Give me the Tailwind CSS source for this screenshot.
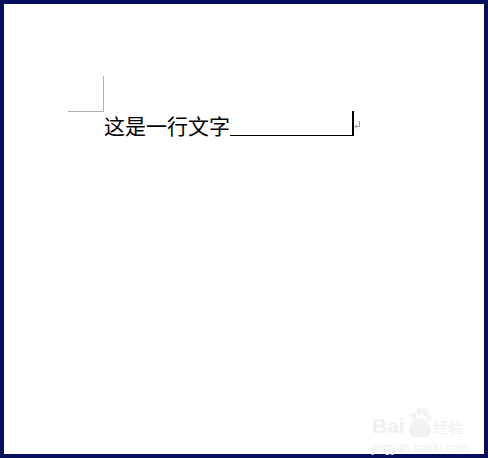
<!DOCTYPE html>
<html lang="zh-CN">
<head>
    <meta charset="UTF-8">
    <title>Word</title>
    <script src="https://cdn.jsdelivr.net/npm/@tailwindcss/browser@4"></script>
</head>
<body class="bg-white overflow-hidden">
    <div class="relative w-[488px] h-[458px] border-[4px] border-[#050f5c] bg-white">
        <!-- page corner mark -->
        <div class="ml-[64px] mt-[72px] w-[36px] h-[36px] border-r border-b border-[#b0b0b0]"></div>

        <!-- text line -->
        <div class="flex items-start ml-[100px] h-[26px] font-['SimSun','Noto_Sans_CJK_SC',sans-serif] text-[21px] leading-[26px] text-black">
            <span>这是一行文字</span>
            <span class="w-[122px] h-[24px] border-b-[1.5px] border-black"></span>
            <span class="w-[2px] h-[25px] -mt-[1px] bg-black"></span>
            <svg class="w-[7px] h-[9px] mt-[9px]" viewBox="0 0 7 9" fill="none" stroke="#999999" stroke-width="1">
                <path d="M5.5 0V5.5H1M3 3.5L1 5.5L3 7.5"/>
            </svg>
        </div>

        <!-- watermark -->
        <div class="absolute left-[368px] top-[403px] w-[100px] h-[48px] text-[#f1f1f3]">
            <div class="flex items-end h-[31px] gap-[1px]">
                <span class="font-['Liberation_Sans',sans-serif] font-bold text-[21px] leading-[24px] tracking-[0px] text-[#f0f0f2]">Bai</span>
                <svg class="w-[26px] h-[31px] shrink-0" viewBox="0 0 26 31" fill="#f2f2f4">
                    <ellipse cx="8" cy="9" rx="2.6" ry="3.6"/>
                    <ellipse cx="13" cy="4.5" rx="2.8" ry="4"/>
                    <ellipse cx="19" cy="5" rx="2.8" ry="4"/>
                    <ellipse cx="23" cy="11" rx="2.4" ry="3.4"/>
                    <path d="M14 11c-5 0-11 7-11 13 0 5 5 6 11 6s11-1 11-6c0-6-6-13-11-13z"/>
                </svg>
                <span class="font-['Noto_Sans_CJK_SC',sans-serif] text-[15px] leading-[22px] text-[#eeeef0]">经验</span>
            </div>
            <div class="font-['Liberation_Sans',sans-serif] text-[12px] leading-[16px] mt-[2px] text-[#f0f0f2]">jingyan.baidu.com</div>
        </div>
    </div>
</body>
</html>
